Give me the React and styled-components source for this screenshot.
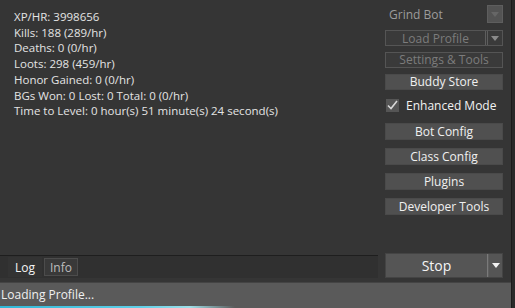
import React from 'react';
import styled, { createGlobalStyle } from 'styled-components';

const GlobalStyle = createGlobalStyle`
  html, body {
    margin: 0;
    padding: 0;
    background: #2a2a2a;
  }
  body {
    font-family: 'Open Sans', 'Noto Sans', sans-serif;
    font-size: 11.5px;
    color: #e6e6e6;
  }
`;

const Frame = styled.div`
  width: 511px;
  height: 308px;
  background: #353535;
  border-right: 1px solid #1c1c1c;
  display: flex;
  flex-direction: column;
  overflow: hidden;
`;

const Main = styled.div`
  height: 250px;
  display: flex;
`;

const Stats = styled.div`
  flex: 1;
  padding: 9px 0 0 14px;
  line-height: 15.7px;
  color: #e4e4e4;
`;

const Side = styled.div`
  width: 118px;
  margin-right: 8px;
  padding-top: 5px;
  display: flex;
  flex-direction: column;
`;

const Combo = styled.div`
  height: 18px;
  display: flex;
  align-items: center;
  justify-content: space-between;
  padding-left: 4px;
  color: #9c9c9c;
  font-size: 12px;
`;

const ComboArrow = styled.div`
  width: 16px;
  height: 18px;
  background: #535353;
  border: 1px solid #5e5e5e;
  box-sizing: border-box;
  display: flex;
  align-items: center;
  justify-content: center;
`;

const Button = styled.div`
  height: ${(p) => p.$h || 16}px;
  margin-top: ${(p) => p.$mt || 0}px;
  box-sizing: border-box;
  border: 1px solid ${(p) => (p.$disabled ? '#555' : '#4a4a4a')};
  background: ${(p) => (p.$disabled ? '#3a3a3a' : '#505050')};
  color: ${(p) => (p.$disabled ? '#7c7c7c' : '#f0f0f0')};
  display: flex;
  align-items: center;
  justify-content: center;
  font-size: 12px;
  line-height: 1;
`;

const SplitButton = styled.div`
  height: 16px;
  margin-top: ${(p) => p.$mt || 0}px;
  box-sizing: border-box;
  border: 1px solid #555;
  background: #3a3a3a;
  color: #7c7c7c;
  display: flex;
  font-size: 12px;
`;

const SplitLabel = styled.div`
  flex: 1;
  display: flex;
  align-items: center;
  justify-content: center;
  border-right: 1px solid #5e5e5e;
  margin-right: 1px;
`;

const SplitArrow = styled.div`
  width: ${(p) => p.$w || 14}px;
  display: flex;
  align-items: center;
  justify-content: center;
  border-left: 1px solid #5e5e5e;
`;

const Check = styled.label`
  height: 16px;
  margin-top: 7px;
  display: flex;
  align-items: center;
  gap: 7px;
  padding-left: 1px;
  color: #f2f2f2;
  font-size: 12px;
`;

const Box = styled.span`
  width: 13px;
  height: 13px;
  background: #555;
  display: flex;
  align-items: center;
  justify-content: center;
`;

const Bottom = styled.div`
  height: 32px;
  display: flex;
`;

const TabArea = styled.div`
  width: 378px;
  box-sizing: border-box;
  margin-top: 6px;
  border-top: 1px solid #1e1e1e;
  background: #303030;
  display: flex;
  align-items: flex-start;
  padding: 1px 0 0 8px;
  gap: 2px;
  height: 23px;
`;

const Tab = styled.div`
  height: ${(p) => (p.$active ? 20 : 18)}px;
  margin-top: ${(p) => (p.$active ? 0 : 1)}px;
  box-sizing: border-box;
  padding: 0 ${(p) => (p.$active ? 6 : 5)}px;
  border: 1px solid ${(p) => (p.$active ? 'transparent' : '#4c4c4c')};
  background: ${(p) => (p.$active ? '#333' : '#393939')};
  color: ${(p) => (p.$active ? '#f5f5f5' : '#bdbdbd')};
  display: flex;
  align-items: center;
  font-size: 12px;
`;

const StopWrap = styled.div`
  margin: 4px 0 0 7px;
  width: 118px;
  height: 25px;
  display: flex;
  background: #555;
  border: 1px solid #444;
  box-sizing: border-box;
`;

const StopLabel = styled.div`
  flex: 1;
  display: flex;
  align-items: center;
  justify-content: center;
  color: #f4f4f4;
  font-size: 14px;
  border-right: 1px solid #7a7a7a;
`;

const Status = styled.div`
  height: 23px;
  margin-top: 1px;
  background: #5a5a5a;
  border-top: 1px solid #444;
  display: flex;
  align-items: center;
  padding-left: 1px;
  color: #f0f0f0;
  font-size: 12px;
`;

const Progress = styled.div`
  height: 2px;
  background: linear-gradient(
    to right,
    #2fb8d8 0px,
    #5fd0e8 140px,
    #9fdfe8 190px,
    #5a5a5a 235px,
    #5a5a5a 100%
  );
`;

const Arrow = ({ color = '#ddd' }) => (
  <svg width="8" height="5" viewBox="0 0 8 5">
    <path d="M0 0 H8 L4 5 Z" fill={color} />
  </svg>
);

const stats = [
  'XP/HR: 3998656',
  'Kills: 188 (289/hr)',
  'Deaths: 0 (0/hr)',
  'Loots: 298 (459/hr)',
  'Honor Gained: 0 (0/hr)',
  'BGs Won: 0 Lost: 0 Total: 0 (0/hr)',
  'Time to Level: 0 hour(s) 51 minute(s) 24 second(s)'
];

export default function App() {
  return (
    <>
      <GlobalStyle />
      <Frame>
        <Main>
          <Stats>
            {stats.map((s) => (
              <div key={s}>{s}</div>
            ))}
          </Stats>
          <Side>
            <Combo>
              <span>Grind Bot</span>
              <ComboArrow>
                <Arrow color="#666" />
              </ComboArrow>
            </Combo>
            <SplitButton $mt={7}>
              <SplitLabel>Load Profile</SplitLabel>
              <SplitArrow>
                <Arrow color="#8a8a8a" />
              </SplitArrow>
            </SplitButton>
            <Button $mt={6} $disabled>
              Settings &amp; Tools
            </Button>
            <Button $mt={6}>Buddy Store</Button>
            <Check>
              <Box>
                <svg width="11" height="10" viewBox="0 0 11 10">
                  <path
                    d="M1 5.5 L4 8.5 L10 1"
                    stroke="#d8d8d8"
                    strokeWidth="1.6"
                    fill="none"
                  />
                </svg>
              </Box>
              Enhanced Mode
            </Check>
            <Button $mt={10} $h={17}>Bot Config</Button>
            <Button $mt={8} $h={17}>Class Config</Button>
            <Button $mt={8} $h={17}>Plugins</Button>
            <Button $mt={8} $h={17}>Developer Tools</Button>
          </Side>
        </Main>
        <Bottom>
          <TabArea>
            <Tab $active>Log</Tab>
            <Tab>Info</Tab>
          </TabArea>
          <StopWrap>
            <StopLabel>Stop</StopLabel>
            <SplitArrow $w={13}>
              <Arrow color="#f2f2f2" />
            </SplitArrow>
          </StopWrap>
        </Bottom>
        <Status>Loading Profile...</Status>
        <Progress />
      </Frame>
    </>
  );
}
